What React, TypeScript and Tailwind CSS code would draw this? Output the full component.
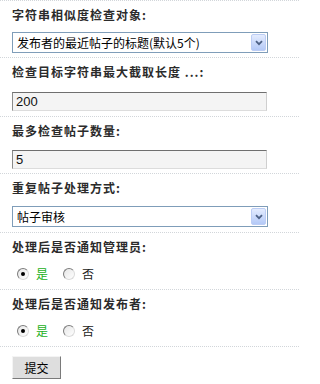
import React from "react";

const label =
  "h-[18px] leading-[18px] text-[12px] font-bold tracking-[1px] text-[#2b2b2b] font-['Noto_Sans_CJK_SC',sans-serif] pl-[12px] whitespace-nowrap";
const sep = "border-t border-dotted border-[#d2d6da]";

function Select({ text }: { text: string }) {
  return (
    <div className="ml-[12px] flex h-[21px] w-[256px] items-center border border-[#7f9db9] bg-white">
      <span className="pl-[4px] text-[12px] leading-[19px] text-black font-['Noto_Sans_CJK_SC',sans-serif] whitespace-nowrap">
        {text}
      </span>
      <span className="ml-auto mr-[1px] flex h-[17px] w-[15px] items-center justify-center rounded-[2px] border border-[#bccdf5] bg-gradient-to-b from-[#e4ecfe] to-[#b4c9f7]">
        <svg width="8" height="6" viewBox="0 0 8 6">
          <path d="M1 1.2 L4 4.2 L7 1.2" fill="none" stroke="#4d6185" strokeWidth="1.8" />
        </svg>
      </span>
    </div>
  );
}

function Input({ value }: { value: string }) {
  return (
    <div className="ml-[12px] flex h-[19px] w-[255px] items-center border border-t-[#6f6f6f] border-l-[#8a8a8a] border-r-[#cfcfcf] border-b-[#dcdcdc] bg-[#f4f4f4]">
      <span className="pl-[3px] text-[13px] leading-[17px] text-[#111] font-['Liberation_Sans',sans-serif]">
        {value}
      </span>
    </div>
  );
}

function Radio({ checked }: { checked?: boolean }) {
  return (
    <span className="flex h-[12px] w-[12px] items-center justify-center rounded-full border border-t-[#7c7c7c] border-l-[#7c7c7c] border-r-[#dadada] border-b-[#dadada] bg-gradient-to-br from-[#e6e6e6] to-white">
      {checked && <span className="h-[4px] w-[4px] rounded-full bg-black" />}
    </span>
  );
}

function RadioRow() {
  return (
    <div className="flex h-[18px] items-center pl-[17px] text-[12px] font-['Noto_Sans_CJK_SC',sans-serif]">
      <Radio checked />
      <span className="ml-[7px] text-[#22b022]">是</span>
      <span className="ml-[15px]">
        <Radio />
      </span>
      <span className="ml-[7px] text-[#222]">否</span>
    </div>
  );
}

export default function App() {
  return (
    <div className="h-[384px] w-[299px] overflow-hidden bg-white">
      <div className={`${sep} pt-[5px] pb-[4px]`}>
        <div className={label}>字符串相似度检查对象:</div>
        <div className="mt-[8px]">
          <Select text="发布者的最近帖子的标题(默认5个)" />
        </div>
      </div>
      <div className={`${sep} pt-[5px] pb-[5px]`}>
        <div className={label}>检查目标字符串最大截取长度 ...:</div>
        <div className="mt-[11px]">
          <Input value="200" />
        </div>
      </div>
      <div className={`${sep} pt-[5px] pb-[4px]`}>
        <div className={label}>最多检查帖子数量:</div>
        <div className="mt-[10px]">
          <Input value="5" />
        </div>
      </div>
      <div className={`${sep} pt-[5px] pb-[5px]`}>
        <div className={label}>重复帖子处理方式:</div>
        <div className="mt-[9px]">
          <Select text="帖子审核" />
        </div>
      </div>
      <div className={`${sep} pt-[5px] pb-[6px]`}>
        <div className={label}>处理后是否通知管理员:</div>
        <div className="mt-[9px]">
          <RadioRow />
        </div>
      </div>
      <div className={`${sep} pt-[5px] pb-[6px]`}>
        <div className={label}>处理后是否通知发布者:</div>
        <div className="mt-[9px]">
          <RadioRow />
        </div>
      </div>
      <div className={`${sep} pt-[9px]`}>
        <button className="ml-[12px] flex h-[23px] w-[49px] items-center justify-center border border-t-[#f4f4f4] border-l-[#f4f4f4] border-r-[#7a7a7a] border-b-[#7a7a7a] bg-[#dedede] text-[12px] text-black font-['Noto_Sans_CJK_SC',sans-serif]">
          提交
        </button>
      </div>
    </div>
  );
}
